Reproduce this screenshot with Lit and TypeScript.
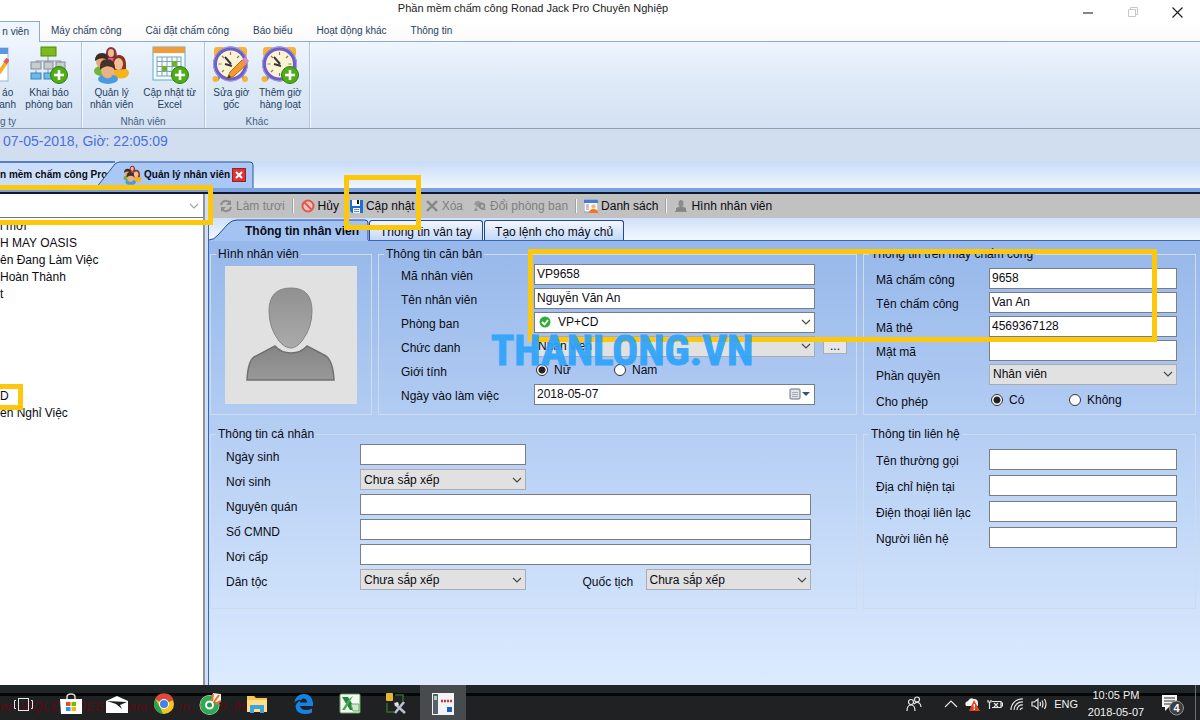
import { LitElement, html, css, svg, nothing } from "lit";
import { customElement } from "lit/decorators.js";

const icon = (w: number, h: number, body: unknown, cls = "") =>
  html`<svg class=${cls} width=${w} height=${h} viewBox="0 0 ${w} ${h}" aria-hidden="true">${body}</svg>`;

const plus = svg`<circle cx="29" cy="29" r="8.5" fill="#4fae16" stroke="#2f7d0c"/><path d="M29 24v10M24 29h10" stroke="#fff" stroke-width="2.6"/>`;

const clock = svg`
  <path d="M5 34l4-6M33 34l-4-6" stroke="#7d74c4" stroke-width="3"/>
  <rect x="2" y="1" width="11" height="10" rx="3" fill="#f7b531"/><rect x="24" y="1" width="11" height="10" rx="3" fill="#f7b531"/>
  <circle cx="3.500" cy="33" r="3" fill="#f5b335"/><circle cx="33" cy="33" r="3" fill="#f5b335"/>
  <circle cx="18.500" cy="18" r="15.500" fill="#fbf3d4" stroke="#6d5fc8" stroke-width="4"/>
  <circle cx="18.500" cy="18" r="17" fill="none" stroke="#a79de6" stroke-width="1"/>
  <path d="M18.500 6v3M18.500 27v3M6.500 18h3M27.500 18h3M10 10l2 2M27 10l-2 2M10 26l2-2" stroke="#8a7d62" stroke-width="1.200"/>
  <path d="M13 11l6 7M13 18l7 2" stroke="#39363c" stroke-width="2"/>`;

const people = svg`
  <ellipse cx="8" cy="25" rx="7" ry="5" fill="#6db637"/><ellipse cx="28" cy="27" rx="8" ry="5.500" fill="#f6b41c"/>
  <path d="M12 12q6-5 12 0v8h-12z" fill="#e05c8f"/>
  <path d="M13 12q-1-11 5-11t6 11z" fill="#8c2f3d"/><ellipse cx="18" cy="7" rx="3" ry="4" fill="#eebb93"/>
  <ellipse cx="8.500" cy="15" rx="5.500" ry="7" fill="#e2a87c"/><path d="M2 15q0-8 7-8t6 7q-7-4-13 1z" fill="#3d2a22"/>
  <path d="M20 24q-2-15 6-15t7 14z" fill="#8a3324"/><ellipse cx="25.500" cy="18" rx="4.500" ry="6" fill="#f0bf97"/>
  <ellipse cx="15" cy="33" rx="10" ry="5" fill="#4b9bdc"/>
  <ellipse cx="14.500" cy="24" rx="6.500" ry="8.500" fill="#e9b184"/><path d="M7 24q-1-11 7-11t8 10q-8-6-15 1z" fill="#4a3125"/>`;

const disk = svg`<path d="M1 1h13v13h-11l-2-2z" fill="#1772d6"/><rect x="3" y="1" width="8" height="6" fill="#fff"/><rect x="8" y="1" width="2" height="4" fill="#111c38"/><rect x="4" y="9" width="7" height="5" fill="#eef5fd"/><path d="M5 10.500h5M5 12.500h5" stroke="#5e6f86" stroke-width=".8"/>`;

const toolIcons: Record<string, unknown> = {
  refresh: svg`<path d="M2 6a5 5 0 0 1 9-2M12 8a5 5 0 0 1-9 2" fill="none" stroke="#8c8c8c" stroke-width="2"/><path d="M12 1v5H7zM2 13V8h5z" fill="#8c8c8c"/>`,
  cancel: svg`<circle cx="7" cy="7" r="5.500" fill="#f3c2bd" stroke="#dd584f" stroke-width="2"/><path d="M3 3l8 8" stroke="#dd584f" stroke-width="2"/>`,
  save: disk,
  remove: svg`<path d="M2 2l10 10M12 2L2 12" stroke="#858585" stroke-width="2.400"/>`,
  move: svg`<path d="M1 5q2-4 5-3l3 2-1 4H4z" fill="#989898"/><circle cx="9" cy="7" r="2.500" fill="none" stroke="#858585" stroke-width="1.500"/><path d="M3 8l-2 4h4M8 11h5l-2-3" fill="#929292"/>`,
  list: svg`<rect x="0" y="1" width="14" height="12" fill="#fff" stroke="#7e9bd2"/><rect x="0" y="1" width="14" height="3" fill="#3f7fdc"/><path d="M2 6h3M2 8h3M2 10h3" stroke="#d06c7c"/><circle cx="9.500" cy="7.500" r="2.200" fill="#eeb98b"/><path d="M5 14q0-4 4.500-4t4.500 4z" fill="#ef7a1a"/>`,
  photo: svg`<ellipse cx="7" cy="4.500" rx="2.500" ry="3.500" fill="#8d8d8d"/><path d="M2 12V9l4-1.500h2L12 9v3z" fill="#858585"/><path d="M1 12.500h12" stroke="#8d8d8d"/>`,
};

const chevron = icon(10, 6, svg`<path d="M1 1l4 4 4-4" fill="none" stroke="#4a4a4a" stroke-width="1.200"/>`, "chev");

const taskIcons = [
  svg`<g fill="none" stroke="#e8e8e8"><rect x="5.500" y="5.500" width="10" height="12"/><path d="M3 7.500H1.500v8H3M18 7.500h1.500v8H18"/></g>`,
  svg`<path d="M7 7V4q0-3 4-3t4 3v3" fill="none" stroke="#ddd" stroke-width="1.500"/><path d="M0 6h22v15H1z" fill="#fff"/><path d="M6 9h4.500v4H6z" fill="#e74c25"/><path d="M11.500 9H16v4h-4.500z" fill="#7ab800"/><path d="M6 14h4.500v4H6z" fill="#1fa0e6"/><path d="M11.500 14H16v4h-4.500z" fill="#fbb800"/>`,
  svg`<path d="M0 8l11-5 11 5v12H0z" fill="#fff"/><path d="M1 8l20 1-7 3 2 4-6-5z" fill="#1c1f22"/>`,
  svg`<circle cx="11" cy="11" r="10" fill="#f2c61c"/><path d="M11 11L2 6a10 10 0 0 1 18.500 1z" fill="#dc4a38"/><path d="M2.300 6L7 14l3 7A10 10 0 0 1 2.300 6z" fill="#2fa04f"/><circle cx="11" cy="11" r="5" fill="#fff"/><circle cx="11" cy="11" r="4" fill="#3d82ee"/>`,
  svg`<circle cx="10.500" cy="12" r="10" fill="#d8eeda"/><circle cx="10.500" cy="12" r="7" fill="none" stroke="#33a852" stroke-width="5"/><circle cx="10.500" cy="12" r="4" fill="#fff"/><circle cx="10.500" cy="12" r="2.500" fill="#1f9c47"/><path d="M13 9l1-9 8 1v8z" fill="#f4f4ee"/><path d="M13 8l1-7M15 9l5-7M16 11l6-3" stroke="#ee6c2b" stroke-width="2"/>`,
  svg`<path d="M1 3h7l2 2h11v14H1z" fill="#f6c94e"/><path d="M1 7h20v12H1z" fill="#fce08a"/><path d="M4 12h14v8h-4v-4H8v4H4z" fill="#3ea2e0"/>`,
  svg`<path d="M2 10Q4 1 12 1t9 9v3H8q1 4 6 4 3 0 6-1.500v4Q17 21 13 21 4 21 3.500 13 5 8 11 6.500 5 6 2 10zM8 9.500h7q0-4-3.500-4T8 9.500z" fill="#1583e2"/>`,
  svg`<rect x="1" y="1" width="20" height="19" rx="1" fill="#f5fbf4" stroke="#5ea45a"/><path d="M3 4h6l8 13h-6z" fill="#22853a"/><path d="M14 3L6 17H3l7-11z" fill="#49ab50"/><path d="M12 11h8v7h-6z" fill="#cfe8cf" stroke="#6caa68"/>`,
  svg`<rect x="1" y="0" width="7" height="8" rx="1" fill="#e9b72a"/><path d="M10 2h8v6M2 10v9h7" fill="none" stroke="#2d6d2b" stroke-width="1.500"/><path d="M10 11l10 9M19 9l-9 11" stroke="#b7c2ce" stroke-width="2.600"/><path d="M9 10l4-1 1 3-3 1z" fill="#dfe5ea"/>`,
  svg`<rect x="0" y="0" width="22" height="22" fill="#f3f4f6"/><rect x="1" y="1" width="5" height="20" fill="#59606b"/><rect x="2" y="3" width="3" height="4" fill="#b7d0bc"/><path d="M9 8h11" stroke="#d8303c" stroke-width="2.400" stroke-dasharray="2 1"/><rect x="15" y="14" width="5" height="5" fill="#1d5fc4"/>`,
];
const taskNames = ["Task View", "Store", "Mail", "Chrome", "Cốc Cốc", "Explorer", "Edge", "Excel", "Tools", "Ronald Jack"];

type Field = { id: string; label: string; kind?: string; value?: string; options?: string[] };

@customElement("app-root")
export class AppRoot extends LitElement {
  static styles = css`
    :host { display: block; }
    * { box-sizing: border-box; }
    button, input, select { font: inherit; color: inherit; margin: 0; border-radius: 0; outline: 0; }
    button { background: none; border: 0; padding: 0; white-space: nowrap; }
    svg { display: block; flex: none; }
    .window { position: relative; display: flex; flex-direction: column; min-height: 100vh; overflow: hidden; background: #fff;
      font: 12px/16px "Liberation Sans", Arial, sans-serif; color: #0b0b12; }

    .title { display: grid; grid-template-columns: 1fr 134px; height: 21px; align-items: center; }
    .title h1 { margin: 0; padding-bottom: 8px; font-size: 11px; font-weight: 400; text-align: center; color: #222; }
    .controls { display: flex; }
    .controls button { flex: 1; display: flex; justify-content: center; }

    .small { font-size: 10px; line-height: 12px; color: #27405f; }
    .menu { display: flex; gap: 24px; height: 21px; align-items: center; background: linear-gradient(#fff, #fafafa); border-bottom: 1px solid #8fa9c8; }
    .menu .current { align-self: stretch; width: 40px; margin-right: -13px; margin-bottom: -1px; padding-right: 10px; text-align: right;
      background: #eef5fd; border: solid #8fa9c8; border-width: 1px 1px 0 0; }
    .ribbon { display: flex; height: 87px; background: linear-gradient(#eef5fd, #dde9f7 50%, #d3e1f2); border-bottom: 1px solid #8f9fb5; }
    .group { display: flex; flex-direction: column; justify-content: space-between; border-right: 1px solid #b4c5da; padding: 4px 3px 0; box-shadow: 1px 0 #f6faff; }
    .group.first { width: 82px; padding-left: 0; }
    .group.mid { width: 123px; }
    .group.last { width: 105px; }
    .row { display: flex; }
    .row button { flex: 1 1 auto; display: flex; flex-direction: column; align-items: center; gap: 3px; white-space: pre; }
    .row .cut { flex: 0 0 16px; width: 16px; align-items: flex-end; margin-right: 4px; overflow: hidden; }
    .row .cut svg { margin-right: 7px; }
    .group .name { text-align: center; color: #47617f; }
    .group.first .name { text-align: left; }
    .status { height: 32px; padding: 4px 3px; font-size: 14px; color: #4a6fe0; background: #d0deef; }

    .docs { display: flex; align-items: flex-end; height: 31px; background: linear-gradient(#c8dbf8, #f1f6fe); border-bottom: 4px solid #7aa2e0; }
    .doc { position: relative; display: flex; align-items: center; height: 27px; font-size: 10px; font-weight: 700; }
    .doc .shape { position: absolute; inset: 0; width: 100%; height: 100%; }
    .doc span, .doc .front { position: relative; }
    .doc.back { width: 115px; }
    .doc.front-tab { width: 158px; margin-left: -19px; padding-left: 27px; gap: 2px; }

    .main { flex: 1; display: grid; grid-template-columns: 205px 1fr; column-gap: 3px; background: #cfe0f8; border-top: 2px solid #10182c; }
    .side { display: flex; flex-direction: column; background: #fff; border-right: 2px solid #8f9298; }
    .pick { position: relative; height: 24px; border-bottom: 1px solid #6f7277; }
    .pick select { width: 100%; height: 100%; border: 0; background: none; appearance: none; }
    .pick .chev { opacity: .5; }
    .tree { list-style: none; margin: 0; padding: 0; line-height: 17px; white-space: nowrap; }
    .tree li { height: 17px; }

    .work { display: flex; flex-direction: column; min-width: 0; border-left: 1px solid #3b66b5; background: linear-gradient(#8fb2e8, #dcebff); }
    .tools { display: flex; align-items: center; height: 24px; padding-left: 5px; background: #c1c1c1; }
    .tools button { display: flex; align-items: center; gap: 3px; padding: 0 5px; height: 24px; }
    .tools button:disabled { color: #7f7f7f; }
    .bar { width: 2px; height: 14px; margin: 0 2px; background: #f4f4f4; border-left: 1px solid #a2a2a2; }
    .tabs { display: flex; align-items: flex-end; height: 23px; background: linear-gradient(#cfe0fa, #f3f8ff); border-bottom: 1px solid #3b66b5; }
    .tabs button { height: 20px; padding: 2px 10px 0; border: 1px solid #24479a; border-bottom: 0; border-radius: 3px 3px 0 0; background: linear-gradient(#f2f7ff, #c4d9f8); }
    .tabs .on { position: relative; height: 22px; width: 160px; margin-bottom: -1px; padding: 2px 10px 0 0; border: 0; background: none; font-weight: 700; text-align: right; }
    .tabs .on svg { position: absolute; inset: 0; width: 100%; height: 100%; }
    .tabs .on span { position: relative; }
    .tabs button + button { margin-left: 1px; }
    .tabs .on + button { margin-left: 0; }

    .page { flex: 1; display: grid; grid-template-columns: 162px 1fr 333px; gap: 11px 6px; align-content: start; padding: 5px 4px 0 1px; }
    fieldset { min-width: 0; margin: 0; padding: 0; border: 1px solid #cfdaea; }
    legend { margin-left: 5px; padding: 0 2px; height: 16px; }
    .wide { grid-column: span 2; }
    .photo { margin: 4px 14px; height: 138px; background: #e1e1e1; display: flex; justify-content: center; }
    .fields { display: grid; align-items: center; }
    .fields.basic { grid-template-columns: 133px 1fr 24px; grid-auto-rows: 24px; padding: 0 9px 4px 22px; column-gap: 0; }
    .fields.device { grid-template-columns: 113px 1fr; grid-template-rows: repeat(5, 24px) 28px; padding: 4px 18px 0 12px; }
    .fields.person { grid-template-columns: 134px 1fr 120px 1fr; grid-auto-rows: 25px; padding: 0 45px 16px 15px; }
    .fields.contact { grid-template-columns: 113px 1fr; grid-auto-rows: 26px; padding: 4px 18px 0 12px; }
    .fields > label, .fields > .lab { padding-top: 4px; white-space: nowrap; }
    .basic > label, .basic > .lab { grid-column: 1; }
    .basic > .cell { margin-right: 8px; }
    .span3 { grid-column: span 3; }
    .mid-label { padding-left: 57px; }
    .cell { position: relative; display: flex; align-items: center; height: 21px; }
    .cell input[type="text"], .cell select { width: 100%; height: 21px; padding: 0 2px; border: 1px solid #787d86; background: #fff; }
    .cell select { appearance: none; padding: 0 3px; border-color: #a9adb3; background: #e1e1e1; }
    .cell select.white { background: #fff; padding-left: 23px; border-color: #787d86; }
    .cell .lead { position: absolute; left: 5px; }
    .chev { position: absolute; right: 4px; top: 50%; margin-top: -3px; pointer-events: none; }
    .cell .cal { position: absolute; right: 4px; }
    .more { height: 16px; border: 1px solid #adadad; background: #e4e6e9; line-height: 12px; }
    .radios { display: grid; grid-template-columns: 78px 1fr; align-items: center; }
    .radios label { display: flex; align-items: center; gap: 6px; padding-left: 2px; }
    .radios input { appearance: none; width: 12px; height: 12px; border: 1px solid #333; border-radius: 50%; background: #fff; }
    .radios input:checked { background: radial-gradient(circle, #222 0 3px, #fff 4px); }

    .taskbar { position: relative; display: flex; justify-content: space-between; height: 35px; background: linear-gradient(#202528 0 8px, #050607 8px 11px, #202122 11px); color: #f2f2f2; }
    .ghost { position: absolute; left: 0; top: 14px; font-size: 13px; font-weight: 700; font-style: italic; color: #4a1216; white-space: pre; }
    .apps { position: relative; display: grid; grid-template-columns: repeat(10, 1fr); width: 466px; padding-left: 1px; }
    .apps button { display: flex; align-items: center; justify-content: center; padding-top: 3px; }
    .apps button:last-child { background: #484b4d; }
    .tray { display: flex; align-items: center; gap: 6px; padding: 3px 4px 0 0; font-size: 11px; }
    .tray .who { margin-right: 16px; }
    .clock { width: 58px; text-align: center; line-height: 17px; margin: 0 2px 0 3px; }
    .note { position: relative; margin-left: 8px; }
    .edge { width: 1px; align-self: stretch; margin: -3px 0 0 4px; background: #6a6d6f; }

    .mark { position: absolute; border: 5px solid #fdc70c; pointer-events: none; }
    .mark.combo { left: -10px; top: 185px; width: 223px; height: 40px; }
    .mark.save { left: 344px; top: 175px; width: 77px; height: 55px; }
    .mark.data { left: 528px; top: 249px; width: 629px; height: 93px; }
    .mark.node { left: -10px; top: 384px; width: 33px; height: 26px; }
    .brand { position: absolute; left: 491px; top: 322px; line-height: 56px; font-family: "Roboto Condensed", "Open Sans Condensed", "Liberation Sans Narrow", "Liberation Sans", sans-serif;
      font-weight: 700; font-size: 43px; color: #2ea3fb; opacity: .93; pointer-events: none; -webkit-text-stroke: 1px #2ea3fb; }
  `;

  private text(id: string, value = "") {
    return html`<input type="text" id=${id} .value=${value} />`;
  }

  private select(id: string, value: string, cls = "") {
    return html`<select id=${id} class=${cls}><option>${value}</option></select>${chevron}`;
  }

  private field(f: Field, cls = "") {
    return html`<label for=${f.id}>${f.label}</label>
      <div class="cell ${cls}">${f.kind === "select" ? this.select(f.id, f.value!) : this.text(f.id, f.value)}</div>`;
  }

  private tool(name: string, label: string, off = false) {
    return html`<button ?disabled=${off}>${icon(14, 14, toolIcons[name])}${label}</button>`;
  }

  private big(pic: unknown, label: string) {
    return html`<button>${icon(38, 38, pic)}${label}</button>`;
  }

  private radios(name: string, a: string, b: string) {
    return html`<div class="radios" role="group" aria-label=${name}>
      <label><input type="radio" name=${name} checked />${a}</label>
      <label><input type="radio" name=${name} />${b}</label>
    </div>`;
  }

  private header() {
    return html`
      <header class="title">
        <h1>Phần mềm chấm công Ronad Jack Pro Chuyên Nghiệp</h1>
        <div class="controls">
          <button aria-label="Thu nhỏ">${icon(11, 11, svg`<path d="M0 6h10" stroke="#111"/>`)}</button>
          <button aria-label="Phóng to">${icon(11, 11, svg`<path d="M.5 2.500h7v7h-7zM2.500 2.500v-2h7v7h-2" fill="none" stroke="#c8c8c8"/>`)}</button>
          <button aria-label="Đóng">${icon(11, 11, svg`<path d="M.5.5l10 10M10.500.5l-10 10" stroke="#222" stroke-width="1.200"/>`)}</button>
        </div>
      </header>
      <nav class="menu small">
        <button class="current">n viên</button>
        ${["Máy chấm công", "Cài đặt chấm công", "Báo biểu", "Hoạt động khác", "Thông tin"].map((t) => html`<button>${t}</button>`)}
      </nav>
      <section class="ribbon small">
        <div class="group first">
          <div class="row">
            <button class="cut">${icon(38, 38, svg`<rect x="4" y="2" width="33" height="33" fill="#fdfefe" stroke="#9cb6d8"/><rect x="4" y="2" width="33" height="6" fill="#5d97dc"/><path d="M28 27l8-12" stroke="#f0b22b" stroke-width="4"/><path d="M34 17l3-4" stroke="#de5a55" stroke-width="4"/>`)}${"áo\nanh"}</button>
            ${this.big(svg`<path d="M18 9v6M6 20v-5h25v5M18 15v14M6 24v6" fill="none" stroke="#8a9199"/>
              <rect x="11" y="1" width="15" height="9" fill="#7cba1d" stroke="#4f8a0b"/>
              <g fill="#c7ccd2" stroke="#858c94"><rect x="1" y="16" width="10" height="7"/><rect x="14" y="16" width="9" height="7"/><rect x="26" y="16" width="9" height="7"/></g>
              <g fill="#6bb9ee" stroke="#3a83b9"><rect x="1" y="27" width="10" height="6"/><rect x="14" y="27" width="9" height="6"/></g>${plus}`, "Khai báo\nphòng ban")}
          </div>
          <div class="name">g ty</div>
        </div>
        <div class="group mid">
          <div class="row">
            ${this.big(people, "Quản lý\nnhân viên")}
            ${this.big(svg`<rect x="2" y="1" width="32" height="33" fill="#f3fbff" stroke="#62a9c8"/><rect x="2" y="1" width="32" height="6" fill="#f19a38"/>
              <g fill="none" stroke="#7fa5b4"><rect x="6" y="11" width="24" height="19"/><path d="M6 15.500h24M6 20.500h24M6 25.500h24M11 11v19M16 11v19M21 11v19M26 11v19"/></g>
              <path d="M11 20h5v5h-5zM21 15h5v5h-5z" fill="#6cb421"/>${plus}`, "Cập nhật từ\nExcel")}
          </div>
          <div class="name">Nhân viên</div>
        </div>
        <div class="group last">
          <div class="row">
            ${this.big(svg`${clock}<path d="M15 33l3-7 12-12 5 4-13 12z" fill="#f29a2e" stroke="#b7681c"/><path d="M30 14l3-3 4 4-3 3z" fill="#d989c4"/><path d="M15 33l2-4 2 2z" fill="#333"/>`, "Sửa giờ\ngốc")}
            ${this.big(svg`${clock}${plus}`, "Thêm giờ\nhàng loạt")}
          </div>
          <div class="name">Khác</div>
        </div>
      </section>
      <div class="status">07-05-2018, Giờ: 22:05:09</div>
      <nav class="docs">
        <button class="doc back">
          <svg class="shape" viewBox="0 0 115 27" preserveAspectRatio="none"><path d="M0 1H115V27H0z" fill="#cbdffa"/><path d="M0 1h115" stroke="#2d5eb5" stroke-width="1.500"/></svg>
          <span>n mềm chấm công Pro</span>
        </button>
        <button class="doc front-tab">
          <svg class="shape" viewBox="0 0 158 27" preserveAspectRatio="none"><path d="M0 27L19 3Q21 1 24 1H154Q157 1 157 4V27z" fill="#a9c8f5"/><path d="M0 27L19 3Q21 1 24 1H154Q157 1 157 4V27" fill="none" stroke="#2f5795"/></svg>
          <svg class="front" width="19" height="20" viewBox="0 0 37 38">${people}</svg>
          <span>Quản lý nhân viên</span>
          <svg class="front" width="14" height="14" viewBox="0 0 14 14"><rect x=".5" y=".5" width="13" height="13" fill="#d8373a" stroke="#a31e22"/><path d="M4 4l6 6M10 4l-6 6" stroke="#fff" stroke-width="2"/></svg>
        </button>
      </nav>`;
  }

  private form() {
    const device: Field[] = [
      { id: "code", label: "Mã chấm công", value: "9658" },
      { id: "nick", label: "Tên chấm công", value: "Van An" },
      { id: "card", label: "Mã thẻ", value: "4569367128" },
      { id: "pass", label: "Mật mã" },
      { id: "role", label: "Phần quyền", kind: "select", value: "Nhân viên" },
    ];
    const contact: Field[] = [
      { id: "alias", label: "Tên thường gọi" },
      { id: "addr", label: "Địa chỉ hiện tại" },
      { id: "tel", label: "Điện thoại liên lạc" },
      { id: "kin", label: "Người liên hệ" },
    ];
    return html`<div class="page">
      <fieldset>
        <legend>Hình nhân viên</legend>
        <div class="photo">${icon(132, 138, svg`
          <defs>
            <linearGradient id="hd" x2="0" y2="1"><stop stop-color="#909090"/><stop offset="1" stop-color="#ababab"/></linearGradient>
            <linearGradient id="bd" x2="0" y2="1"><stop stop-color="#858585"/><stop offset="1" stop-color="#999"/></linearGradient>
          </defs>
          <path d="M66 22Q87 22 87 45 87 62 77 75 71 82 66 82 60 82 54 75 44 62 44 45 44 22 66 22z" fill="url(#hd)" stroke="#858585"/>
          <path d="M50 80Q56 87 66 87T82 80L101 90Q108 95 109 114H22Q23 95 29 91z" fill="url(#bd)" stroke="#707070" stroke-width="1.500"/>`)}</div>
      </fieldset>

      <fieldset>
        <legend>Thông tin căn bản</legend>
        <div class="fields basic">
          ${this.field({ id: "emp", label: "Mã nhân viên", value: "VP9658" })}
          ${this.field({ id: "name", label: "Tên nhân viên", value: "Nguyễn Văn An" })}
          <label for="dept">Phòng ban</label>
          <div class="cell">${this.select("dept", "VP+CD", "white")}
            ${icon(12, 12, svg`<circle cx="6" cy="6" r="5.500" fill="#2fae3c"/><path d="M3 6l2.500 2.500L9 4" fill="none" stroke="#fff" stroke-width="1.800"/>`, "lead")}</div>
          <label for="job">Chức danh</label>
          <div class="cell">${this.select("job", "Nhân viên")}</div>
          <button class="more">...</button>
          <span class="lab">Giới tính</span>
          ${this.radios("Giới tính", "Nữ", "Nam")}
          <label for="start">Ngày vào làm việc</label>
          <div class="cell">${this.text("start", "2018-05-07")}
            ${icon(22, 12, svg`<rect x="1" y="1" width="10" height="10" rx="1" fill="#dfe3ea" stroke="#6c7280"/><path d="M3 4.500h6M3 6.500h6M3 8.500h6" stroke="#a7aebb"/><path d="M13 4h8l-4 4z" fill="#33508a"/>`, "cal")}</div>
        </div>
      </fieldset>

      <fieldset>
        <legend>Thông tin trên máy chấm công</legend>
        <div class="fields device">
          ${device.map((f) => this.field(f))}
          <span class="lab">Cho phép</span>
          ${this.radios("Cho phép", "Có", "Không")}
        </div>
      </fieldset>

      <fieldset class="wide">
        <legend>Thông tin cá nhân</legend>
        <div class="fields person">
          ${this.field({ id: "dob", label: "Ngày sinh" })}<span></span><span></span>
          ${this.field({ id: "pob", label: "Nơi sinh", kind: "select", value: "Chưa sắp xếp" })}<span></span><span></span>
          ${this.field({ id: "home", label: "Nguyên quán" }, "span3")}
          ${this.field({ id: "idno", label: "Số CMND" }, "span3")}
          ${this.field({ id: "issued", label: "Nơi cấp" }, "span3")}
          ${this.field({ id: "ethnic", label: "Dân tộc", kind: "select", value: "Chưa sắp xếp" })}
          <label class="mid-label" for="nation">Quốc tịch</label>
          <div class="cell">${this.select("nation", "Chưa sắp xếp")}</div>
        </div>
      </fieldset>

      <fieldset>
        <legend>Thông tin liên hệ</legend>
        <div class="fields contact">${contact.map((f) => this.field(f))}</div>
      </fieldset>
    </div>`;
  }

  private taskbar() {
    const line = (d: string) => svg`<path d=${d} fill="none" stroke="#e6e6e6" stroke-width="1.200"/>`;
    return html`<footer class="taskbar">
      <div class="ghost">er:.\\SQLEXPRESS. Data:PM_in_Pro9_9999</div>
      <div class="apps">${taskIcons.map((p, i) => html`<button aria-label=${taskNames[i]}>${icon(22, 22, p)}</button>`)}</div>
      <div class="tray">
        ${icon(16, 16, svg`<circle cx="5" cy="6" r="2.500" fill="none" stroke="#e6e6e6" stroke-width="1.200"/><circle cx="11" cy="3.500" r="2.500" fill="none" stroke="#e6e6e6" stroke-width="1.200"/>${line("M1 15q0-6 4-6t4 6M8 8q3-3 5-1 2 1 2 4")}`, "who")}
        ${icon(14, 14, line("M1 10l6-6 6 6"))}
        ${icon(17, 16, svg`<path d="M2 10q-2-4 2-5 2-4 6-2 4 0 4 4v3z" fill="#f4f4f4"/><path d="M10 4l6 11H5z" fill="#e2421f"/><path d="M10.300 8v3.500M10.300 12.500v1.500" stroke="#fff" stroke-width="1.300"/>`)}
        ${icon(16, 14, line("M5 4.500h9v6H5M14 6h1.500v3H14M1 3v2h3V3M2.500 5v7M7 6l4 4M11 6L7 10"))}
        ${icon(16, 16, line("M2 14A11 11 0 0 1 14 3M5 14a8 8 0 0 1 9-8M8 14a5 5 0 0 1 6-5M11 14a3 3 0 0 1 3-2"))}
        ${icon(17, 14, line("M1 5h2.500L7 2v10L3.500 9H1zM9 5q1 2 0 4M11 3.500q2 3.500 0 7M13.500 2q3 5 0 10"))}
        <span>ENG</span>
        <div class="clock">10:05 PM<br />2018-05-07</div>
        ${icon(24, 24, svg`<path d="M1 3h15v12H8l-4 4v-4H1z" fill="#f4f4f4"/><path d="M3 6h11M3 9h11M3 12h7" stroke="#333"/><circle cx="15.500" cy="16" r="7" fill="#3d4043" stroke="#8f9193"/><text x="15.500" y="20" font-size="11" font-weight="700" text-anchor="middle" fill="#fff">4</text>`, "note")}
        <div class="edge"></div>
      </div>
    </footer>`;
  }

  render() {
    const tree = ["i mới", "H MAY OASIS", "ên Đang Làm Việc", "Hoàn Thành", "t", "", "", "", "", "", "D", "ên Nghỉ Việc"];
    return html`<div class="window">
      ${this.header()}
      <main class="main">
        <aside class="side">
          <div class="pick"><select aria-label="Phòng ban"><option></option></select>${chevron}</div>
          <ul class="tree">${tree.map((t) => html`<li>${t || nothing}</li>`)}</ul>
        </aside>
        <section class="work">
          <div class="tools">
            ${this.tool("refresh", "Làm tươi", true)}<span class="bar"></span>
            ${this.tool("cancel", "Hủy")}${this.tool("save", "Cập nhật")}${this.tool("remove", "Xóa", true)}${this.tool("move", "Đổi phòng ban", true)}<span class="bar"></span>
            ${this.tool("list", "Danh sách")}<span class="bar"></span>
            ${this.tool("photo", "Hình nhân viên")}
          </div>
          <div class="tabs">
            <button class="on">
              <svg viewBox="0 0 160 22" preserveAspectRatio="none"><path d="M0 21Q5 21 9 16L19 5Q23 1 28 1H156Q159 1 159 4V22H0z" fill="#a3c3f3"/><path d="M0 21Q5 21 9 16L19 5Q23 1 28 1H156Q159 1 159 4V21" fill="none" stroke="#24479a"/></svg>
              <span>Thông tin nhân viên</span>
            </button>
            <button>Thông tin vân tay</button>
            <button>Tạo lệnh cho máy chủ</button>
          </div>
          ${this.form()}
        </section>
      </main>
      ${this.taskbar()}
      <div class="mark combo"></div><div class="mark save"></div><div class="mark data"></div><div class="mark node"></div>
      <div class="brand">THANLONG.VN</div>
    </div>`;
  }
}
